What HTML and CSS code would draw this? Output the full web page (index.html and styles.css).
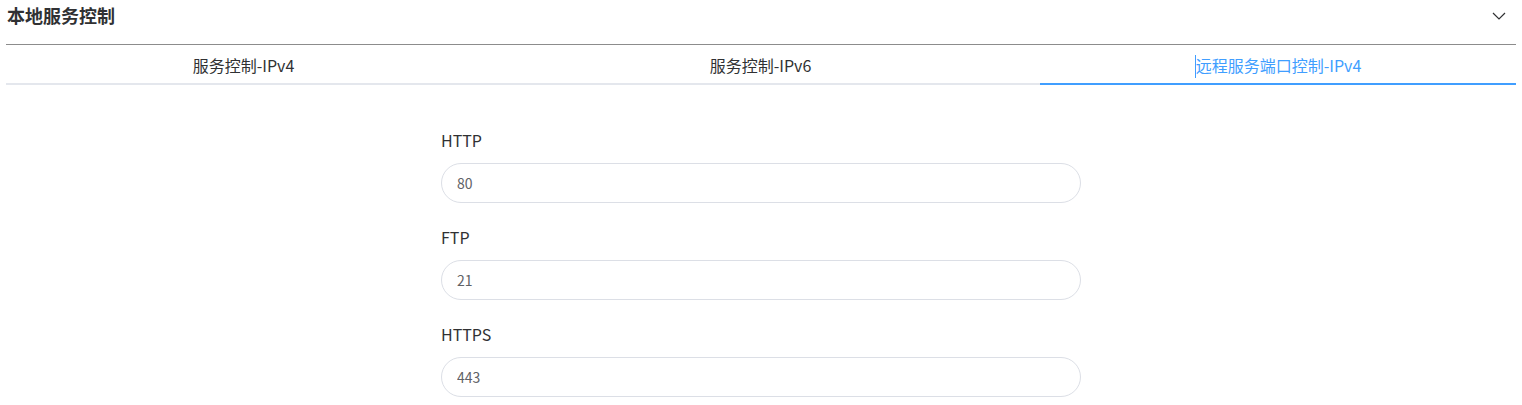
FILE: index.html
```html
<!DOCTYPE html>
<html lang="zh-CN">
<head>
<meta charset="utf-8">
<title>本地服务控制</title>
<link rel="stylesheet" href="styles.css">
</head>
<body>
<div class="panel">
  <div class="panel-header">
    <span class="panel-title">本地服务控制</span>
    <svg class="chevron" width="14" height="8" viewBox="0 0 14 8"><path d="M1 1 L7 7 L13 1" fill="none" stroke="#303133" stroke-width="1.2"/></svg>
  </div>
  <div class="tabs">
    <div class="tab tab-a">服务控制-IPv4</div>
    <div class="tab tab-b">服务控制-IPv6</div>
    <div class="tab tab-c active"><span class="caret"></span>远程服务端口控制-IPv4</div>
  </div>
  <form class="form">
    <div class="field">
      <label class="field-label">HTTP</label>
      <input class="field-input" type="text" value="80">
    </div>
    <div class="field">
      <label class="field-label">FTP</label>
      <input class="field-input" type="text" value="21">
    </div>
    <div class="field">
      <label class="field-label">HTTPS</label>
      <input class="field-input" type="text" value="443">
    </div>
  </form>
</div>
</body>
</html>
```

FILE: styles.css
```css
html, body {
  margin: 0;
  padding: 0;
  background: #ffffff;
  font-family: "Noto Sans CJK SC", "Noto Sans", sans-serif;
  color: #303133;
}

.panel {
  margin: 0 6px;
}

.panel-header {
  display: flex;
  align-items: flex-start;
  justify-content: space-between;
  padding-bottom: 13px;
  border-bottom: 1px solid #8c8c8c;
}

.panel-title {
  font-size: 18px;
  font-weight: 700;
  line-height: 31px;
  padding-left: 1px;
  color: #303133;
}

.chevron {
  margin-top: 12px;
  margin-right: 10px;
}

.tabs {
  display: grid;
  grid-template-columns: 475px 559px 1fr;
  border-bottom: 2px solid #e4e7ed;
}

.tab {
  height: 37px;
  padding-top: 1px;
  line-height: 38px;
  font-size: 16px;
  text-align: center;
  color: #303133;
  margin-bottom: -2px;
  border-bottom: 2px solid transparent;
}

.tab.active {
  color: #409eff;
  border-bottom-color: #409eff;
}

.caret {
  display: inline-block;
  width: 1px;
  height: 23px;
  background: #409eff;
  vertical-align: -6px;
}

.form {
  width: 640px;
  margin: 43px auto 0;
}

.field {
  display: flex;
  flex-direction: column;
  margin-bottom: 22px;
}

.field-label {
  font-size: 16px;
  line-height: 24px;
  margin-bottom: 11px;
  color: #303133;
}

.field-input {
  box-sizing: border-box;
  height: 40px;
  width: 100%;
  border: 1px solid #dcdfe6;
  border-radius: 20px;
  padding: 0 15px;
  font-family: "Noto Sans CJK SC", "Noto Sans", sans-serif;
  font-size: 14px;
  color: #606266;
  background: #ffffff;
  outline: none;
}
```
